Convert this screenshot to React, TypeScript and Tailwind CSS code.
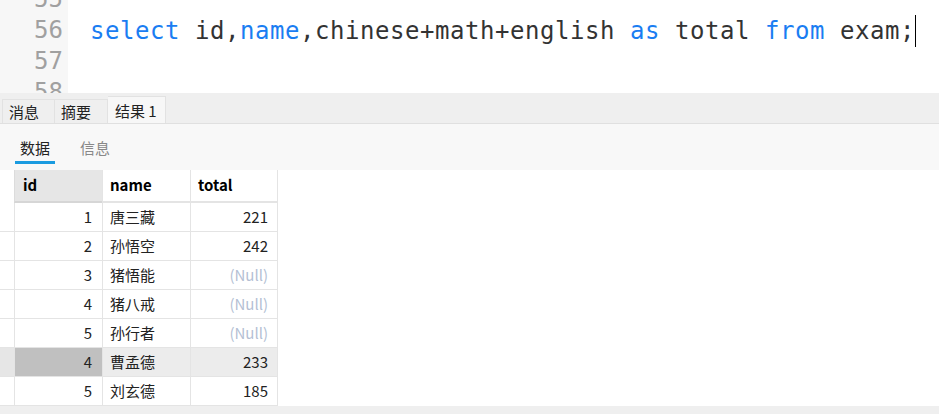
import React from 'react'

const rows = [
  { id: 1, name: '唐三藏', total: '221' },
  { id: 2, name: '孙悟空', total: '242' },
  { id: 3, name: '猪悟能', total: null },
  { id: 4, name: '猪八戒', total: null },
  { id: 5, name: '孙行者', total: null },
  { id: 4, name: '曹孟德', total: '233', selected: true },
  { id: 5, name: '刘玄德', total: '185' },
]

const mono = { fontFamily: '"DejaVu Sans Mono", "Liberation Mono", monospace' }
const cjk = { fontFamily: '"Noto Sans CJK SC", "Noto Sans", sans-serif' }

function Kw({ children }: { children: React.ReactNode }) {
  return <span className="text-[#1a7df2]">{children}</span>
}

export default function App() {
  return (
    <div className="w-[939px] h-[414px] overflow-hidden bg-white" style={cjk}>
      {/* editor */}
      <div className="h-[93px] overflow-hidden flex">
        <div className="w-[68px] bg-[#f7f7f7] shrink-0">
          <div className="-mt-[16px] text-[24px] leading-[31px] text-[#a0a0a0] text-right pr-[5px]" style={mono}>
            <div>55</div>
            <div>56</div>
            <div>57</div>
            <div>58</div>
          </div>
        </div>
        <div className="flex-1 pl-[22px]">
          <div className="-mt-[16px] text-[24px] leading-[31px] text-[#333] tracking-[0.55px] whitespace-pre" style={mono}>
            <div>&nbsp;</div>
            <div className="flex items-center">
              <span>
                <Kw>select</Kw> id,<Kw>name</Kw>,chinese+math+english <Kw>as</Kw> total <Kw>from</Kw> exam;
              </span>
              <span className="w-px h-[32px] bg-black" />
            </div>
            <div>&nbsp;</div>
          </div>
        </div>
      </div>

      {/* result tabs */}
      <div className="h-[31px] bg-[#efefef] border-b border-[#e0e0e0] flex items-end pl-[2px] text-[15px] text-[#222]">
        <div className="w-[53px] h-[24px] pl-[6px] border border-b-0 border-[#e2e2e2] flex items-center leading-none">消息</div>
        <div className="w-[53px] h-[24px] pl-[6px] border border-b-0 border-l-0 border-[#e2e2e2] flex items-center leading-none">摘要</div>
        <div className="w-[58px] h-[27px] pl-[7px] bg-[#f7f7f7] border border-b-0 border-l-0 border-[#e2e2e2] flex items-center leading-none">结果 1</div>
      </div>

      {/* sub tabs */}
      <div className="h-[46px] bg-[#f8f8f8] flex items-start pl-[15px] pt-[12px] text-[15px]">
        <div className="flex flex-col items-center w-[40px]">
          <span className="leading-[24px] text-[#222]">数据</span>
          <span className="mt-[1px] h-[3px] w-[40px] bg-[#1a9be0]" />
        </div>
        <span className="ml-[25px] leading-[24px] text-[#888]">信息</span>
      </div>

      {/* grid */}
      <div className="flex text-[15px]">
        <div className="w-[278px]">
          <div className="flex h-[33px]">
            <div className="w-[14px]" />
            <div className="w-[88px] bg-[#e6e6e6] border-b-2 border-[#d6d6d6] border-l border-l-[#dcdcdc] flex items-center pl-[8px] font-bold text-black">id</div>
            <div className="w-[88px] border-b-2 border-[#e4e4e4] border-l border-l-[#e4e4e4] flex items-center pl-[7px] font-bold text-black">name</div>
            <div className="w-[88px] border-b-2 border-[#e4e4e4] border-l border-r border-[#e4e4e4] flex items-center pl-[7px] font-bold text-black">total</div>
          </div>
          {rows.map((r, i) => (
            <div key={i} className={`flex h-[29px] ${r.selected ? 'bg-[#ececec]' : ''}`}>
              <div className={`w-[14px] border-b border-[#e4e4e4] ${r.selected ? 'bg-[#e6e6e6]' : ''}`} />
              <div className={`w-[88px] border-l border-b border-[#e4e4e4] flex items-center justify-end pr-[10px] text-[#222] ${r.selected ? 'bg-[#c0c0c0]' : ''}`}>{r.id}</div>
              <div className="w-[88px] border-l border-b border-[#e4e4e4] flex items-center pl-[7px] text-[#222]">{r.name}</div>
              <div className="w-[88px] border-l border-r border-b border-[#e4e4e4] flex items-center justify-end pr-[9px]">
                {r.total ? <span className="text-[#222]">{r.total}</span> : <span className="text-[#b4bfd4]">(Null)</span>}
              </div>
            </div>
          ))}
        </div>
      </div>
      <div className="h-[10px] bg-[#efefef]" />
    </div>
  )
}
